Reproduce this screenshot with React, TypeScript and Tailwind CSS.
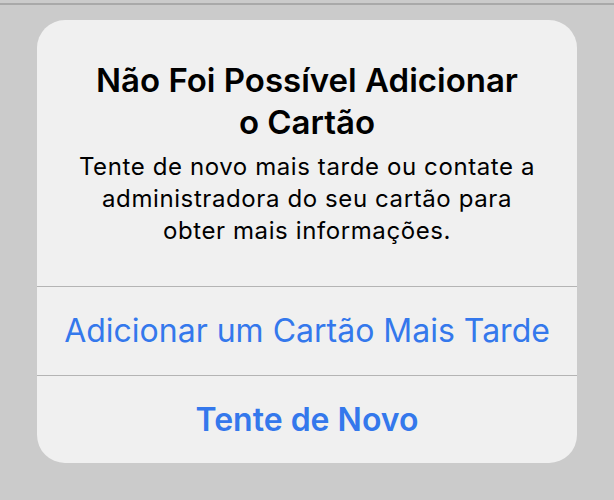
export default function App() {
  const font = { fontFamily: "Inter, 'Noto Sans', sans-serif" };
  return (
    <div className="w-[614px] h-[500px] bg-[#cbcbcb] pt-[3px] overflow-hidden" style={font}>
      <div className="border-t-2 border-[#a9a9a9]">
        <div className="ml-[37px] mt-[15px] w-[540px] rounded-[28px] bg-[#f0f0f0] overflow-hidden">
          <div className="pt-[39px] pb-[39px] px-4 text-center text-black">
            <h1 className="text-[33px] leading-[42px] font-semibold">
              Não Foi Possível Adicionar
              <br />
              o Cartão
            </h1>
            <p className="mt-2 text-[24px] leading-[32px] tracking-[0.6px]">
              Tente de novo mais tarde ou contate a
              <br />
              administradora do seu cartão para
              <br />
              obter mais informações.
            </p>
          </div>
          <button className="w-full h-[89px] border-t border-[#b4b4b4] flex items-center justify-center text-[32px] text-[#3478ec]">
            Adicionar um Cartão Mais Tarde
          </button>
          <button className="w-full h-[88px] border-t border-[#b4b4b4] flex items-center justify-center text-[32px] font-semibold text-[#3478ec]">
            Tente de Novo
          </button>
        </div>
      </div>
    </div>
  );
}
